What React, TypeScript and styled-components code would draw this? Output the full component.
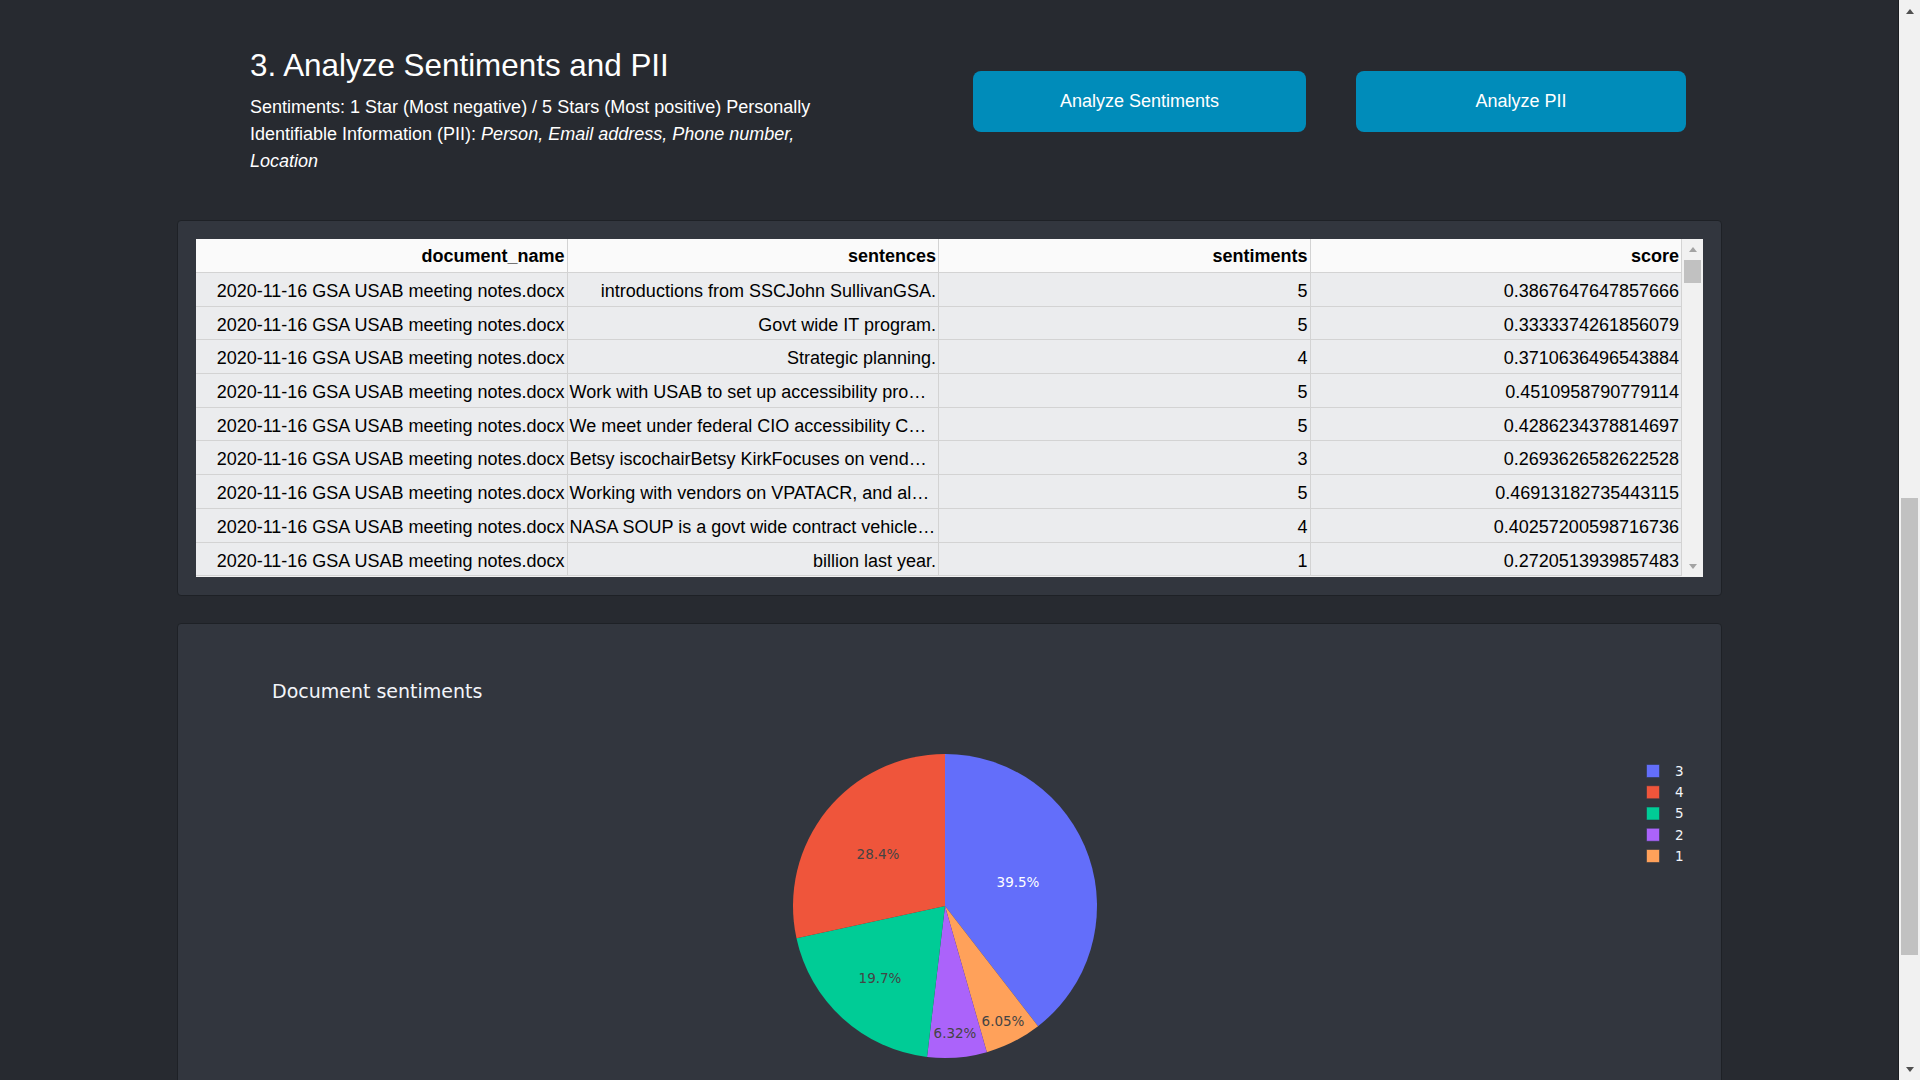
import React from 'react'
import styled, { createGlobalStyle } from 'styled-components'

const GlobalStyle = createGlobalStyle`
  html, body {
    margin: 0;
    height: 100%;
    overflow: hidden;
  }
  body {
    background: #272a30;
    color: #fff;
    font-family: 'Liberation Sans', Arial, sans-serif;
  }
`

const DOC = '2020-11-16 GSA USAB meeting notes.docx'

const columns = ['document_name', 'sentences', 'sentiments', 'score']

const rows = [
  ['introductions from SSCJohn SullivanGSA.', '5', '0.3867647647857666'],
  ['Govt wide IT program.', '5', '0.3333374261856079'],
  ['Strategic planning.', '4', '0.3710636496543884'],
  ['Work with USAB to set up accessibility programs across agencies.', '5', '0.4510958790779114'],
  ['We meet under federal CIO accessibility Community of Practice.', '5', '0.4286234378814697'],
  ['Betsy iscochairBetsy KirkFocuses on vendor accessibility.', '3', '0.2693626582622528'],
  ['Working with vendors on VPATACR, and also procurement.', '5', '0.46913182735443115'],
  ['NASA SOUP is a govt wide contract vehicle, it sold.', '4', '0.40257200598716736'],
  ['billion last year.', '1', '0.2720513939857483']
]

// clockwise from 12 o'clock, as plotted
const slices = [
  { label: '3', value: 39.5, color: '#636efa', text: '39.5%', tx: 822, ty: 240, light: true },
  { label: '1', value: 6.05, color: '#ffa15a', text: '6.05%', tx: 807, ty: 379 },
  { label: '2', value: 6.32, color: '#ab63fa', text: '6.32%', tx: 759, ty: 391 },
  { label: '5', value: 19.7, color: '#00cc96', text: '19.7%', tx: 684, ty: 336 },
  { label: '4', value: 28.4, color: '#ef553b', text: '28.4%', tx: 682, ty: 212 }
]

const legendOrder = ['3', '4', '5', '2', '1']

const Shell = styled.div`
  display: flex;
  height: 100vh;
`

const Main = styled.main`
  flex: 1;
  min-width: 0;
  overflow: hidden;
  padding: 0 176px 0 177px;
`

const Header = styled.section`
  display: flex;
  align-items: flex-start;
  padding-left: 73px;
`

const Intro = styled.div`
  width: 590px;
  padding-top: 47.5px;
`

const Title = styled.h2`
  margin: 0;
  font-size: 31.4px;
  line-height: 36px;
  font-weight: 400;
`

const Lead = styled.p`
  margin: 10.5px 0 0;
  font-size: 18px;
  line-height: 27px;
`

const Actions = styled.div`
  display: flex;
  gap: 50px;
  margin: 71px 0 0 133px;
`

const ActionButton = styled.button<{ $width: number }>`
  width: ${({ $width }) => $width}px;
  height: 61px;
  border: none;
  border-radius: 8px;
  background: #008cba;
  color: #fff;
  font-family: 'Liberation Sans', Arial, sans-serif;
  font-size: 18px;
  cursor: pointer;
`

const Card = styled.section<{ $gap: number }>`
  margin-top: ${({ $gap }) => $gap}px;
  background: #32363e;
  border: 1px solid #1e2126;
  border-radius: 4px;
  padding: 18px;
`

const TableFrame = styled.div`
  display: flex;
  height: 338px;
  background: #f1f1f1;
`

const Grid = styled.div`
  flex: 1;
  min-width: 0;
  overflow: hidden;
  display: grid;
  grid-template-columns: repeat(4, 1fr);
  grid-template-rows: 34px;
  grid-auto-rows: 33.7px;
`

const Cell = styled.div<{ $head?: boolean }>`
  box-sizing: border-box;
  padding: ${({ $head }) => ($head ? '1px' : '2px')} 2px 0;
  border-right: 1px solid #d3d3d3;
  border-bottom: 1px solid #d3d3d3;
  background: ${({ $head }) => ($head ? '#fafafa' : '#ebecee')};
  color: #000;
  font-size: 18px;
  font-weight: ${({ $head }) => ($head ? 700 : 400)};
  line-height: 32px;
  text-align: right;
  white-space: nowrap;
  overflow: hidden;
  text-overflow: ellipsis;
`

const Rail = styled.div<{ $edge?: boolean }>`
  width: 21px;
  display: flex;
  flex-direction: column;
  align-items: center;
  background: #f1f1f1;
  border-left: ${({ $edge }) => ($edge ? '1px solid #1b1d21' : 'none')};
`

const RailButton = styled.div<{ $size: number }>`
  height: ${({ $size }) => $size}px;
  width: 100%;
  display: flex;
  align-items: center;
  justify-content: center;
`

const Arrow = styled.span<{ $down?: boolean; $w: number; $color: string }>`
  width: 0;
  height: 0;
  border-left: ${({ $w }) => $w}px solid transparent;
  border-right: ${({ $w }) => $w}px solid transparent;
  ${({ $down, $w, $color }) =>
    $down
      ? `border-top: ${$w + 1}px solid ${$color};`
      : `border-bottom: ${$w + 1}px solid ${$color};`}
`

const RailTrack = styled.div`
  flex: 1;
  width: 100%;
  display: flex;
  justify-content: center;
  align-items: flex-start;
`

const Thumb = styled.div<{ $offset: number; $size: number }>`
  width: 17px;
  height: ${({ $size }) => $size}px;
  margin-top: ${({ $offset }) => $offset}px;
  background: #c1c1c1;
`

const ChartSvg = styled.svg`
  display: block;
  width: 100%;
  height: 450px;
  font-family: 'DejaVu Sans', Verdana, sans-serif;
`

const ChartTitle = styled.text`
  font-size: 19px;
  fill: #f2f5fa;
`

const SliceText = styled.text<{ $light?: boolean }>`
  font-size: 13.5px;
  fill: ${({ $light }) => ($light ? '#fff' : '#444')};
`

const LegendText = styled.text`
  font-size: 13.5px;
  fill: #f2f5fa;
`

const CX = 749
const CY = 264
const R = 152

const slicePaths = () => {
  const total = slices.reduce((s, x) => s + x.value, 0)
  let start = 0
  return slices.map((slice) => {
    const a0 = (start / total) * Math.PI * 2
    start += slice.value
    const a1 = (start / total) * Math.PI * 2
    const x0 = CX + R * Math.sin(a0)
    const y0 = CY - R * Math.cos(a0)
    const x1 = CX + R * Math.sin(a1)
    const y1 = CY - R * Math.cos(a1)
    const large = a1 - a0 > Math.PI ? 1 : 0
    return {
      ...slice,
      d: `M${CX} ${CY} L${x0} ${y0} A${R} ${R} 0 ${large} 1 ${x1} ${y1} Z`
    }
  })
}

const SentimentPie = () => {
  const paths = slicePaths()
  return (
    <ChartSvg viewBox="0 0 1507 450" preserveAspectRatio="xMinYMin meet">
      <ChartTitle x={76} y={56}>Document sentiments</ChartTitle>
      {paths.map((p) => (
        <path key={p.label} d={p.d} fill={p.color} />
      ))}
      {paths.map((p) => (
        <SliceText key={p.label} $light={p.light} x={p.tx} y={p.ty} dy="0.36em" textAnchor="middle">
          {p.text}
        </SliceText>
      ))}
      {legendOrder.map((label, i) => {
        const slice = slices.find((s) => s.label === label)!
        const top = 122 + i * 21.25
        return (
          <g key={label}>
            <rect x={1450.5} y={top + 0.5} width={13} height={13} fill={slice.color} stroke="rgba(40,52,66,0.55)" strokeWidth={1} />
            <LegendText x={1479} y={top + 11.8}>{label}</LegendText>
          </g>
        )
      })}
    </ChartSvg>
  )
}

const ResultsTable = () => (
  <TableFrame>
    <Grid>
      {columns.map((c) => (
        <Cell key={c} $head>{c}</Cell>
      ))}
      {rows.map((row, i) => (
        <React.Fragment key={i}>
          <Cell>{DOC}</Cell>
          {row.map((value, k) => (
            <Cell key={k}>{value}</Cell>
          ))}
        </React.Fragment>
      ))}
    </Grid>
    <Rail>
      <RailButton $size={21}>
        <Arrow $w={4} $color="#a3a3a3" />
      </RailButton>
      <RailTrack>
        <Thumb $offset={0} $size={23} />
      </RailTrack>
      <RailButton $size={21}>
        <Arrow $down $w={4} $color="#a3a3a3" />
      </RailButton>
    </Rail>
  </TableFrame>
)

const App = () => {
  return (
    <>
      <GlobalStyle />
      <Shell>
        <Main>
          <Header>
            <Intro>
              <Title>3. Analyze Sentiments and PII</Title>
              <Lead>
                Sentiments: 1 Star (Most negative) / 5 Stars (Most positive) Personally Identifiable
                Information (PII): <em>Person, Email address, Phone number, Location</em>
              </Lead>
            </Intro>
            <Actions>
              <ActionButton $width={333}>Analyze Sentiments</ActionButton>
              <ActionButton $width={330}>Analyze PII</ActionButton>
            </Actions>
          </Header>
          <Card $gap={45}>
            <ResultsTable />
          </Card>
          <Card $gap={27}>
            <SentimentPie />
          </Card>
        </Main>
        <Rail $edge>
          <RailButton $size={22}>
            <Arrow $w={4.5} $color="#505050" />
          </RailButton>
          <RailTrack>
            <Thumb $offset={476} $size={457} />
          </RailTrack>
          <RailButton $size={22}>
            <Arrow $down $w={4.5} $color="#505050" />
          </RailButton>
        </Rail>
      </Shell>
    </>
  )
}

export default App
